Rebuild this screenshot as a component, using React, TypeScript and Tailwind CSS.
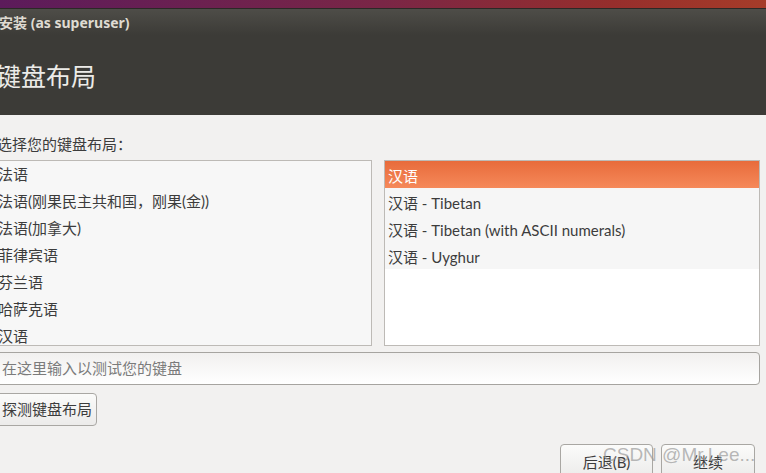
const leftItems = ['法语', '法语(刚果民主共和国，刚果(金))', '法语(加拿大)', '菲律宾语', '芬兰语', '哈萨克语', '汉语']
const rightItems = ['汉语', '汉语 - Tibetan', '汉语 - Tibetan (with ASCII numerals)', '汉语 - Uyghur']

export default function App() {
  return (
    <div className="relative w-[766px] h-[473px] overflow-hidden bg-[#f2f1f0] text-[#3c3c3c] font-['Lato','Noto_Sans_CJK_SC',sans-serif]">
      {/* desktop strip */}
      <div className="h-[8px] bg-[linear-gradient(90deg,#5c1b5b,#7a2646_50%,#962e2c_80%,#a63c29)]" />
      <div className="h-px bg-[#2a2926]" />

      {/* header */}
      <div className="h-[106px] bg-[linear-gradient(#4e4d48,#3c3b37_26px)] flex flex-col">
        <div className="h-[26px] pt-[2px] flex items-center -ml-[1px] text-[14px] font-bold text-[#dfdbd2] leading-none font-['Noto_Sans','Noto_Sans_CJK_SC',sans-serif]">安装 (as superuser)</div>
        <div className="mt-[29px] -ml-[4px] text-[25px] leading-none text-[#ecebe8]">键盘布局</div>
      </div>

      {/* body */}
      <div className="-ml-[8px] mr-[6px] flex flex-col">
        <div className="mt-[19px] h-[20px] flex items-center text-[15px] leading-none pl-[5px]">选择您的键盘布局：</div>

        <div className="mt-[6px] flex gap-[12px] h-[186px]">
          <div className="w-[380px] border border-[#bdbab6] bg-[#f7f7f7] overflow-hidden">
            <div className="-mt-[2px]">
              {leftItems.map((t) => (
                <div key={t} className="h-[27px] flex items-center pt-[3px] pl-[5px] text-[15px] leading-none whitespace-nowrap">{t}</div>
              ))}
            </div>
          </div>
          <div className="flex-1 border border-[#bdbab6] bg-white overflow-hidden">
            {rightItems.map((t, i) => (
              <div
                key={t}
                className={
                  i === 0
                    ? 'h-[27px] flex items-center pt-[3px] pl-[3px] text-[15px] leading-none text-white bg-[linear-gradient(#e86b3b,#f5895a)]'
                    : 'h-[27px] flex items-center pt-[3px] pl-[3px] text-[15px] leading-none bg-[#f6f6f6]'
                }
              >
                {t}
              </div>
            ))}
          </div>
        </div>

        <div className="mt-[6px] h-[33px] rounded-[4px] border border-[#a6a4a0] bg-[linear-gradient(#f1f0ef,#ffffff)] flex items-center pl-[9px] text-[15px] text-[#7b7b7b] leading-none">
          在这里输入以测试您的键盘
        </div>

        <div className="mt-[8px] flex">
          <div className="h-[33px] pl-[9px] pr-[4px] rounded-[4px] border border-[#a9a7a3] bg-[linear-gradient(#fbfbfa,#ecebea)] flex items-center text-[15px] leading-none">
            探测键盘布局
          </div>
        </div>

        <div className="mt-[18px] flex justify-end gap-[8px] mr-[5px]">
          <div className="w-[93px] h-[34px] rounded-[4px] border border-[#a9a7a3] bg-[linear-gradient(#fbfbfa,#ecebea)] flex items-center justify-center text-[15px] leading-none pt-[2px]">
            后退(B)
          </div>
          <div className="w-[94px] h-[34px] rounded-[4px] border border-[#a9a7a3] bg-[linear-gradient(#fbfbfa,#ecebea)] flex items-center justify-center text-[15px] leading-none pt-[2px]">
            继续
          </div>
        </div>
      </div>

      {/* watermark */}
      <div className="absolute left-[603px] top-[445px] text-[19px] leading-none text-[#9a9a9a]/70 font-['Liberation_Sans',sans-serif] whitespace-nowrap">
        CSDN @Mr.Lee...
      </div>
    </div>
  )
}
